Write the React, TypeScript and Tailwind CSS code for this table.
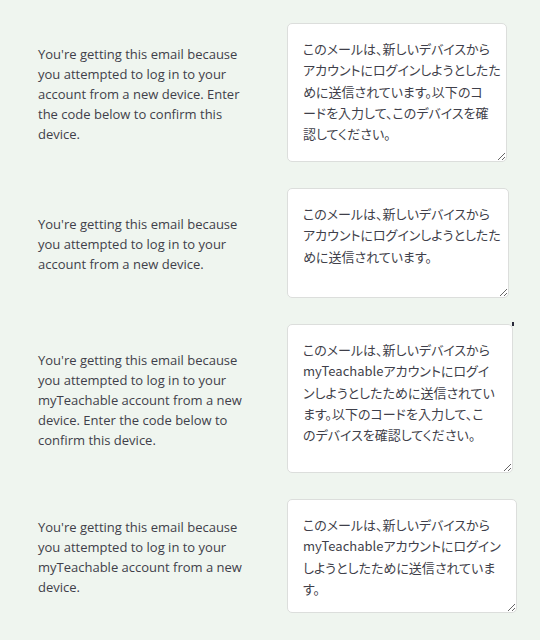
import React from "react";

type Row = {
  left: string[];
  right: string[];
  w: number;
  h: number;
  dot?: boolean;
};

const rows: Row[] = [
  {
    left: [
      "You're getting this email because",
      "you attempted to log in to your",
      "account from a new device. Enter",
      "the code below to confirm this",
      "device.",
    ],
    right: [
      "このメールは、新しいデバイスから",
      "アカウントにログインしようとしたた",
      "めに送信されています。以下のコ",
      "ードを入力して、このデバイスを確",
      "認してください。",
    ],
    w: 220,
    h: 139,
  },
  {
    left: [
      "You're getting this email because",
      "you attempted to log in to your",
      "account from a new device.",
    ],
    right: [
      "このメールは、新しいデバイスから",
      "アカウントにログインしようとしたた",
      "めに送信されています。",
    ],
    w: 222,
    h: 110,
  },
  {
    left: [
      "You're getting this email because",
      "you attempted to log in to your",
      "myTeachable account from a new",
      "device. Enter the code below to",
      "confirm this device.",
    ],
    right: [
      "このメールは、新しいデバイスから",
      "myTeachableアカウントにログイ",
      "ンしようとしたために送信されてい",
      "ます。以下のコードを入力して、こ",
      "のデバイスを確認してください。",
    ],
    w: 226,
    h: 149,
    dot: true,
  },
  {
    left: [
      "You're getting this email because",
      "you attempted to log in to your",
      "myTeachable account from a new",
      "device.",
    ],
    right: [
      "このメールは、新しいデバイスから",
      "myTeachableアカウントにログイン",
      "しようとしたために送信されていま",
      "す。",
    ],
    w: 230,
    h: 114,
  },
];

export default function App() {
  return (
    <div className="w-[540px] h-[640px] bg-[#eff5ef] overflow-hidden pt-[23px] flex flex-col gap-[26px] text-[#3f3f4a]">
      {rows.map((r, i) => (
        <div key={i} className="flex items-center">
          <div
            className="w-[287px] shrink-0 pl-[38px] text-[13px] leading-[20px] pt-[2px]"
            style={{ fontFamily: '"Open Sans", "Noto Sans", sans-serif' }}
          >
            {r.left.map((l, j) => (
              <div key={j} className="whitespace-nowrap">
                {l}
              </div>
            ))}
          </div>
          <div className="relative">
            <textarea
              readOnly
              wrap="off"
              defaultValue={r.right.join("\n")}
              style={{
                width: r.w,
                height: r.h,
                fontFamily: '"Noto Sans CJK JP", "Open Sans", sans-serif',
              }}
              className="block bg-white border border-[#dcdedc] rounded-[5px] pl-[15px] pr-[4px] pt-[14px] text-[13px] leading-[21.3px] overflow-hidden resize-y text-[#3f3f4a] [font-feature-settings:'palt'] outline-none"
            />
            {r.dot && (
              <div className="absolute right-[-1px] top-[-2px] w-[2px] h-[4px] bg-[#2a2a3a]" />
            )}
          </div>
        </div>
      ))}
    </div>
  );
}
